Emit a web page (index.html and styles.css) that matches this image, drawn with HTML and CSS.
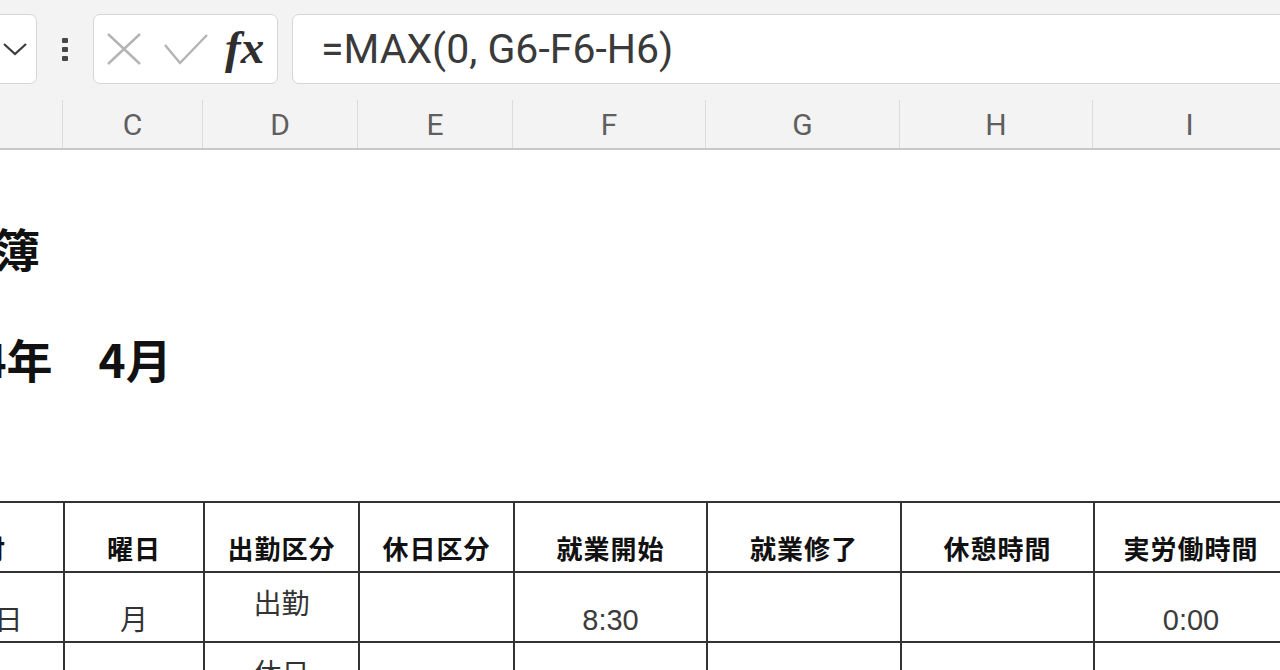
FILE: index.html
```html
<!DOCTYPE html>
<html lang="ja">
<head>
  <meta charset="UTF-8" />
  <title>出勤簿</title>
  <link rel="stylesheet" href="styles.css">
</head>
<body>

  <!-- formula bar -->
  <div class="toolbar">
    <div class="namebox">
      <svg width="26" height="16" viewBox="0 0 26 16"><polyline points="2,3 13,13 24,3" fill="none" stroke="#3c3c3c" stroke-width="2.2"/></svg>
    </div>
    <div class="grip"><span></span><span></span><span></span></div>
    <div class="fxbox">
      <svg class="icon-x" width="36" height="34" viewBox="0 0 36 34"><path d="M2 2 L34 32 M34 2 L2 32" stroke="#b4b4b4" stroke-width="2.4" fill="none"/></svg>
      <svg class="icon-ok" width="46" height="33" viewBox="0 0 46 33"><polyline points="2,12 17,30 44,2" fill="none" stroke="#b4b4b4" stroke-width="2.4"/></svg>
      <span class="fx">fx</span>
    </div>
    <div class="formula">=MAX(0, G6-F6-H6)</div>
  </div>

  <!-- column letters -->
  <div class="colheads">
    <div class="colhead w-b">B</div>
    <div class="colhead w-c">C</div>
    <div class="colhead w-d">D</div>
    <div class="colhead w-e">E</div>
    <div class="colhead w-f">F</div>
    <div class="colhead w-g">G</div>
    <div class="colhead w-h">H</div>
    <div class="colhead w-i">I</div>
  </div>

  <!-- sheet -->
  <div class="sheet">
    <div class="title">出勤簿</div>
    <div class="period">2024年　4月</div>

    <table class="grid">
      <colgroup>
        <col class="w-b"><col class="w-c"><col class="w-d"><col class="w-e">
        <col class="w-f"><col class="w-g"><col class="w-h"><col class="w-i">
      </colgroup>
      <tr class="head">
        <th>日付</th>
        <th>曜日</th>
        <th>出勤区分</th>
        <th>休日区分</th>
        <th>就業開始</th>
        <th>就業修了</th>
        <th>休憩時間</th>
        <th>実労働時間</th>
      </tr>
      <tr>
        <td>4月1日</td>
        <td>月</td>
        <td class="kind">出勤</td>
        <td></td>
        <td class="num">8:30</td>
        <td></td>
        <td></td>
        <td class="num">0:00</td>
      </tr>
      <tr>
        <td>4月2日</td>
        <td>火</td>
        <td class="kind">休日</td>
        <td></td>
        <td></td>
        <td></td>
        <td></td>
        <td></td>
      </tr>
    </table>
  </div>

</body>
</html>
```

FILE: styles.css
```css
* {
  box-sizing: border-box;
}

body {
  margin: 0;
  width: 1280px;
  height: 670px;
  overflow: hidden;
  background: #fff;
  font-family: "Noto Sans CJK JP", sans-serif;
  color: #111;
}

/* formula bar */
.toolbar {
  display: flex;
  height: 100px;
  padding: 14px 0 16px;
  background: #f3f3f3;
}

.namebox {
  width: 100px;
  margin-left: -63px;
  background: #fff;
  border: 1px solid #d6d6d6;
  border-radius: 7px;
  display: flex;
  align-items: center;
  justify-content: flex-end;
  padding-right: 8px;
}

.grip {
  width: 7px;
  margin: 0 24px 0 25px;
  display: flex;
  flex-direction: column;
  justify-content: center;
  gap: 4px;
}

.grip span {
  width: 6px;
  height: 5px;
  background: #474747;
  border-radius: 1px;
}

.fxbox {
  width: 185px;
  background: #fff;
  border: 1px solid #d6d6d6;
  border-radius: 7px;
  display: flex;
  align-items: center;
  padding-left: 12px;
}

.icon-ok {
  margin-left: 21px;
}

.fx {
  margin-left: 16px;
  font-family: "Liberation Serif", serif;
  font-style: italic;
  font-weight: 700;
  font-size: 47px;
  color: #2e2e2e;
  line-height: 1;
  margin-top: -4px;
}

.formula {
  flex: 1;
  margin-left: 14px;
  margin-right: -20px;
  padding-left: 28px;
  background: #fff;
  border: 1px solid #d6d6d6;
  border-radius: 7px;
  display: flex;
  align-items: center;
  font-family: Roboto, sans-serif;
  font-size: 41px;
  color: #3a3a3a;
}

/* column letters */
.colheads {
  display: flex;
  height: 50px;
  margin-left: -107px;
  background: #f3f3f3;
  border-bottom: 2px solid #c8c8c8;
}

.colhead {
  flex: none;
  display: flex;
  align-items: center;
  justify-content: center;
  border-right: 1px solid #dcdcdc;
  font-family: Roboto, sans-serif;
  font-size: 30px;
  color: #5f5f5f;
}

.w-b { width: 170px; }
.w-c { width: 140px; }
.w-d { width: 155px; }
.w-e { width: 155px; }
.w-f { width: 193px; }
.w-g { width: 194px; }
.w-h { width: 193px; }
.w-i { width: 194px; }

/* sheet */
.sheet {
  margin-left: -107px;
  padding-top: 74px;
}

.title,
.period {
  font-size: 46px;
  font-weight: 700;
  line-height: 1;
}

.title {
  padding-left: 9px;
}

.period {
  margin-top: 65px;
  padding-left: 5px;
}

.grid {
  margin-top: 120px;
  border-collapse: collapse;
  table-layout: fixed;
  width: 1394px;
}

.grid th,
.grid td {
  border: 2px solid #333;
  height: 70px;
  padding: 0 0 8px;
  text-align: center;
  vertical-align: bottom;
  line-height: 1.2;
}

.grid th {
  font-size: 26px;
  font-weight: 700;
  letter-spacing: 1px;
}

.grid td {
  font-size: 28px;
  color: #333;
  padding-bottom: 5px;
}

.grid td.kind {
  vertical-align: middle;
  padding: 0 0 8px;
}

.grid td.num {
  font-family: "Liberation Sans", sans-serif;
  font-size: 29px;
  color: #3c3c3c;
  padding-bottom: 3px;
}
```
